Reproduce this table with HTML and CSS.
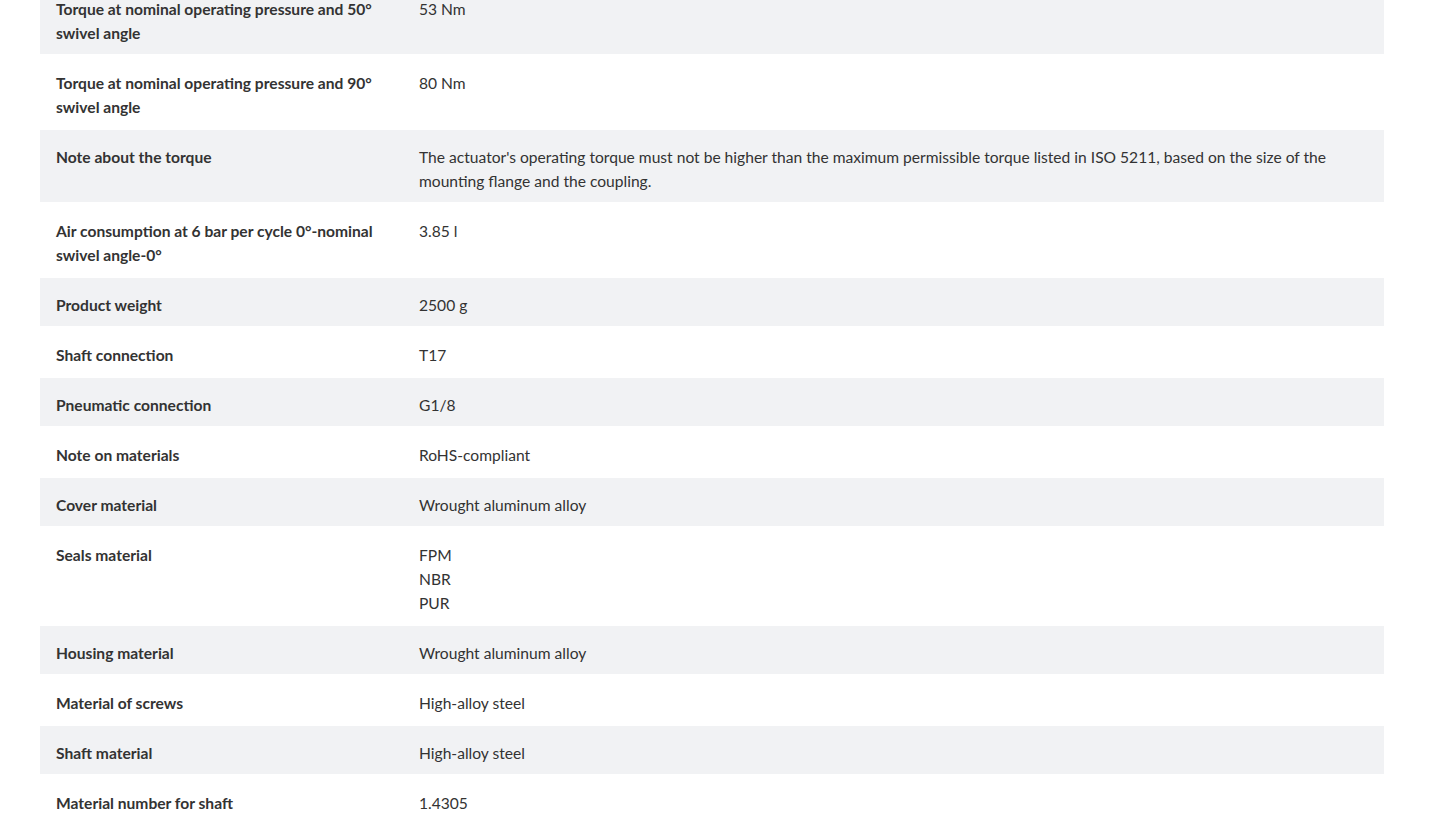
FILE: index.html
```html
<!DOCTYPE html>
<html lang="en">
<head>
<meta charset="utf-8">
<title>Technical data</title>
<link rel="stylesheet" href="styles.css">
</head>
<body>
<div class="specs">
  <div class="row grey"><div class="label">Torque at nominal operating pressure and 50° swivel angle</div><div class="value">53 Nm</div></div>
  <div class="row"><div class="label">Torque at nominal operating pressure and 90° swivel angle</div><div class="value">80 Nm</div></div>
  <div class="row grey"><div class="label">Note about the torque</div><div class="value">The actuator's operating torque must not be higher than the maximum permissible torque listed in ISO 5211, based on the size of the mounting flange and the coupling.</div></div>
  <div class="row"><div class="label">Air consumption at 6 bar per cycle 0°-nominal swivel angle-0°</div><div class="value">3.85 l</div></div>
  <div class="row grey"><div class="label">Product weight</div><div class="value">2500 g</div></div>
  <div class="row"><div class="label">Shaft connection</div><div class="value">T17</div></div>
  <div class="row grey"><div class="label">Pneumatic connection</div><div class="value">G1/8</div></div>
  <div class="row"><div class="label">Note on materials</div><div class="value">RoHS-compliant</div></div>
  <div class="row grey"><div class="label">Cover material</div><div class="value">Wrought aluminum alloy</div></div>
  <div class="row"><div class="label">Seals material</div><div class="value"><div>FPM</div><div>NBR</div><div>PUR</div></div></div>
  <div class="row grey"><div class="label">Housing material</div><div class="value">Wrought aluminum alloy</div></div>
  <div class="row"><div class="label">Material of screws</div><div class="value">High-alloy steel</div></div>
  <div class="row grey"><div class="label">Shaft material</div><div class="value">High-alloy steel</div></div>
  <div class="row"><div class="label">Material number for shaft</div><div class="value">1.4305</div></div>
</div>
</body>
</html>
```

FILE: styles.css
```css
html, body {
  margin: 0;
  padding: 0;
  background: #ffffff;
  overflow: hidden;
}
body {
  font-family: Lato, "Liberation Sans", sans-serif;
  font-size: 15.6px;
  line-height: 24px;
  color: #333333;
}
.specs {
  margin: -18px 0 0 40px;
  width: 1344px;
  display: flex;
  flex-direction: column;
  gap: 2px;
}
.row {
  display: grid;
  grid-template-columns: 363px 1fr;
}
.row.grey {
  background: #f1f2f4;
}
.label {
  padding: 15px 16px 9px 16px;
  font-weight: 700;
}
.value {
  padding: 15px 16px 9px 16px;
}
```
